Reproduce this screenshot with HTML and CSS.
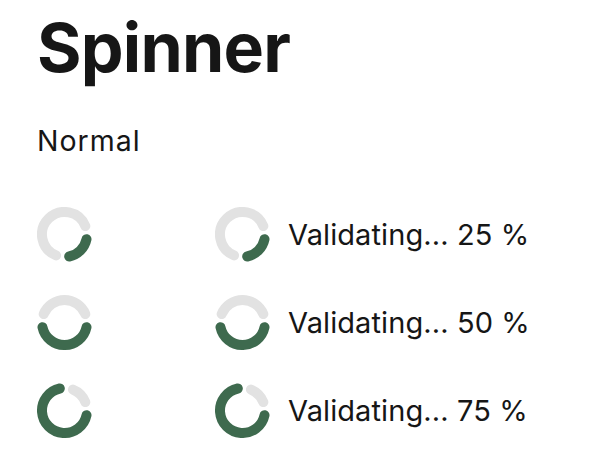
FILE: index.html
```html
<!DOCTYPE html>
<html lang="en">
<head>
<meta charset="utf-8">
<title>Spinner</title>
<link rel="stylesheet" href="styles.css">
</head>
<body>
<main class="page">
  <h1 class="title">Spinner</h1>
  <h2 class="subtitle">Normal</h2>
  <div class="grid">
    <div class="cell">
      <svg class="spinner" viewBox="0 0 55 55" aria-hidden="true">
        <path class="track" d="M19.07 48.36 A22.5 22.5 0 1 1 48.36 19.07"/>
        <path class="bar" d="M49.51 32.18 A22.5 22.5 0 0 1 32.18 49.51"/>
      </svg>
    </div>
    <div class="cell">
      <svg class="spinner" viewBox="0 0 55 55" aria-hidden="true">
        <path class="track" d="M19.07 48.36 A22.5 22.5 0 1 1 48.36 19.07"/>
        <path class="bar" d="M49.51 32.18 A22.5 22.5 0 0 1 32.18 49.51"/>
      </svg>
      <span class="label">Validating... 25 %</span>
    </div>

    <div class="cell">
      <svg class="spinner" viewBox="0 0 55 55" aria-hidden="true">
        <path class="track" d="M6.64 19.07 A22.5 22.5 0 0 1 48.36 19.07"/>
        <path class="bar" d="M49.51 32.18 A22.5 22.5 0 0 1 5.49 32.18"/>
      </svg>
    </div>
    <div class="cell">
      <svg class="spinner" viewBox="0 0 55 55" aria-hidden="true">
        <path class="track" d="M6.64 19.07 A22.5 22.5 0 0 1 48.36 19.07"/>
        <path class="bar" d="M49.51 32.18 A22.5 22.5 0 0 1 5.49 32.18"/>
      </svg>
      <span class="label">Validating... 50 %</span>
    </div>

    <div class="cell">
      <svg class="spinner" viewBox="0 0 55 55" aria-hidden="true">
        <path class="track" d="M35.93 6.64 A22.5 22.5 0 0 1 48.36 19.07"/>
        <path class="bar" d="M49.51 32.18 A22.5 22.5 0 1 1 22.82 5.49"/>
      </svg>
    </div>
    <div class="cell">
      <svg class="spinner" viewBox="0 0 55 55" aria-hidden="true">
        <path class="track" d="M35.93 6.64 A22.5 22.5 0 0 1 48.36 19.07"/>
        <path class="bar" d="M49.51 32.18 A22.5 22.5 0 1 1 22.82 5.49"/>
      </svg>
      <span class="label">Validating... 75 %</span>
    </div>
  </div>
</main>
</body>
</html>
```

FILE: styles.css
```css
html, body {
  margin: 0;
  padding: 0;
  background: #ffffff;
}

body {
  font-family: Inter, "Noto Sans", sans-serif;
  color: #161616;
}

.page {
  padding: 13px 0 0 37px;
}

.title {
  margin: 0;
  font-size: 68px;
  line-height: 68px;
  font-weight: 750;
  letter-spacing: -0.8px;
}

.subtitle {
  margin: 46px 0 0;
  font-size: 28.5px;
  line-height: 27.5px;
  font-weight: 400;
  letter-spacing: 1px;
}

.grid {
  margin-top: 52px;
  display: grid;
  grid-template-columns: 178px auto;
  row-gap: 33px;
}

.cell {
  display: flex;
  align-items: center;
  gap: 18px;
}

.spinner {
  width: 55px;
  height: 55px;
  flex: none;
  display: block;
}

.spinner path {
  fill: none;
  stroke-width: 10;
  stroke-linecap: round;
}

.track {
  stroke: #e2e2e2;
}

.bar {
  stroke: #3e6a4e;
}

.label {
  font-size: 29px;
  line-height: 29px;
  font-weight: 400;
  letter-spacing: 0.1px;
}
```
